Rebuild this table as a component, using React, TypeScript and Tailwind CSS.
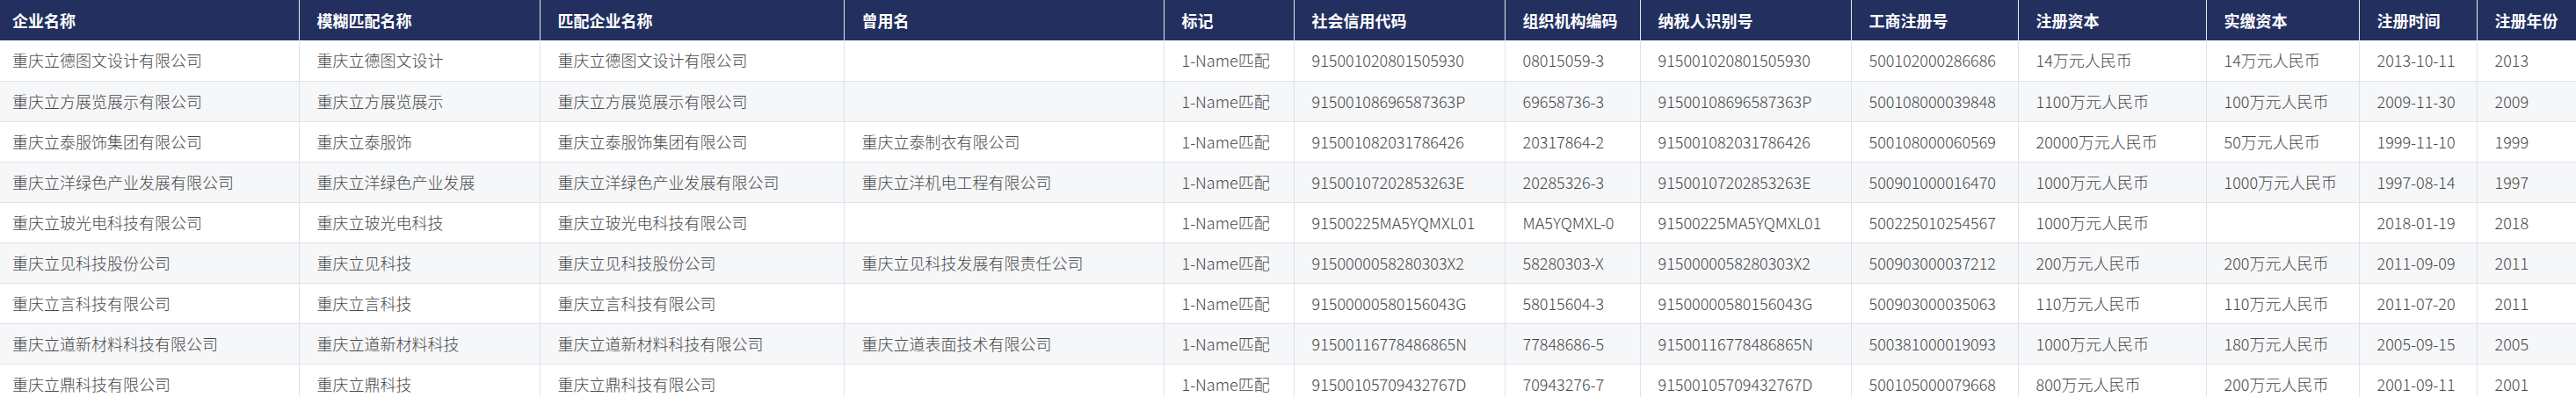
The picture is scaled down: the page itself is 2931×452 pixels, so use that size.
const COLS = [
  { title: "企业名称", w: 340 },
  { title: "模糊匹配名称", w: 274 },
  { title: "匹配企业名称", w: 346 },
  { title: "曾用名", w: 364 },
  { title: "标记", w: 148 },
  { title: "社会信用代码", w: 240 },
  { title: "组织机构编码", w: 154 },
  { title: "纳税人识别号", w: 240 },
  { title: "工商注册号", w: 190 },
  { title: "注册资本", w: 214 },
  { title: "实缴资本", w: 174 },
  { title: "注册时间", w: 134 },
  { title: "注册年份", w: 113 },
];

const ROWS: string[][] = [
  ["重庆立德图文设计有限公司", "重庆立德图文设计", "重庆立德图文设计有限公司", "", "1-Name匹配", "915001020801505930", "08015059-3", "915001020801505930", "500102000286686", "14万元人民币", "14万元人民币", "2013-10-11", "2013"],
  ["重庆立方展览展示有限公司", "重庆立方展览展示", "重庆立方展览展示有限公司", "", "1-Name匹配", "91500108696587363P", "69658736-3", "91500108696587363P", "500108000039848", "1100万元人民币", "100万元人民币", "2009-11-30", "2009"],
  ["重庆立泰服饰集团有限公司", "重庆立泰服饰", "重庆立泰服饰集团有限公司", "重庆立泰制衣有限公司", "1-Name匹配", "915001082031786426", "20317864-2", "915001082031786426", "500108000060569", "20000万元人民币", "50万元人民币", "1999-11-10", "1999"],
  ["重庆立洋绿色产业发展有限公司", "重庆立洋绿色产业发展", "重庆立洋绿色产业发展有限公司", "重庆立洋机电工程有限公司", "1-Name匹配", "91500107202853263E", "20285326-3", "91500107202853263E", "500901000016470", "1000万元人民币", "1000万元人民币", "1997-08-14", "1997"],
  ["重庆立玻光电科技有限公司", "重庆立玻光电科技", "重庆立玻光电科技有限公司", "", "1-Name匹配", "91500225MA5YQMXL01", "MA5YQMXL-0", "91500225MA5YQMXL01", "500225010254567", "1000万元人民币", "", "2018-01-19", "2018"],
  ["重庆立见科技股份公司", "重庆立见科技", "重庆立见科技股份公司", "重庆立见科技发展有限责任公司", "1-Name匹配", "9150000058280303X2", "58280303-X", "9150000058280303X2", "500903000037212", "200万元人民币", "200万元人民币", "2011-09-09", "2011"],
  ["重庆立言科技有限公司", "重庆立言科技", "重庆立言科技有限公司", "", "1-Name匹配", "91500000580156043G", "58015604-3", "91500000580156043G", "500903000035063", "110万元人民币", "110万元人民币", "2011-07-20", "2011"],
  ["重庆立道新材料科技有限公司", "重庆立道新材料科技", "重庆立道新材料科技有限公司", "重庆立道表面技术有限公司", "1-Name匹配", "91500116778486865N", "77848686-5", "91500116778486865N", "500381000019093", "1000万元人民币", "180万元人民币", "2005-09-15", "2005"],
  ["重庆立鼎科技有限公司", "重庆立鼎科技", "重庆立鼎科技有限公司", "", "1-Name匹配", "91500105709432767D", "70943276-7", "91500105709432767D", "500105000079668", "800万元人民币", "200万元人民币", "2001-09-11", "2001"],
];

export default function App() {
  return (
    <div className="w-[2931px] h-[452px] overflow-hidden bg-white font-['Noto_Sans_CJK_SC','Noto_Sans',sans-serif]">
      <table className="w-full table-fixed border-collapse text-[18px]">
        <colgroup>
          {COLS.map((c) => (
            <col key={c.title} style={{ width: c.w }} />
          ))}
        </colgroup>
        <thead>
          <tr className="bg-[#23305f] text-white">
            {COLS.map((c, i) => (
              <th
                key={c.title}
                className={`h-[46px] py-0 pr-2 text-left font-bold whitespace-nowrap border-l border-[#e4e7ed] first:border-l-0 ${i === 0 ? "pl-[14px]" : "pl-5"}`}
              >
                {c.title}
              </th>
            ))}
          </tr>
        </thead>
        <tbody className="text-[#474747] font-light">
          {ROWS.map((row, r) => (
            <tr key={r} className={r % 2 === 1 ? "bg-[#f6f7f9]" : "bg-white"}>
              {row.map((cell, i) => (
                <td
                  key={i}
                  className={`h-[46px] py-0 pr-2 whitespace-nowrap overflow-hidden border-b border-l border-[#dfe2e7] first:border-l-0 ${i === 0 ? "pl-[14px]" : "pl-5"}`}
                >
                  {cell}
                </td>
              ))}
            </tr>
          ))}
        </tbody>
      </table>
    </div>
  );
}
